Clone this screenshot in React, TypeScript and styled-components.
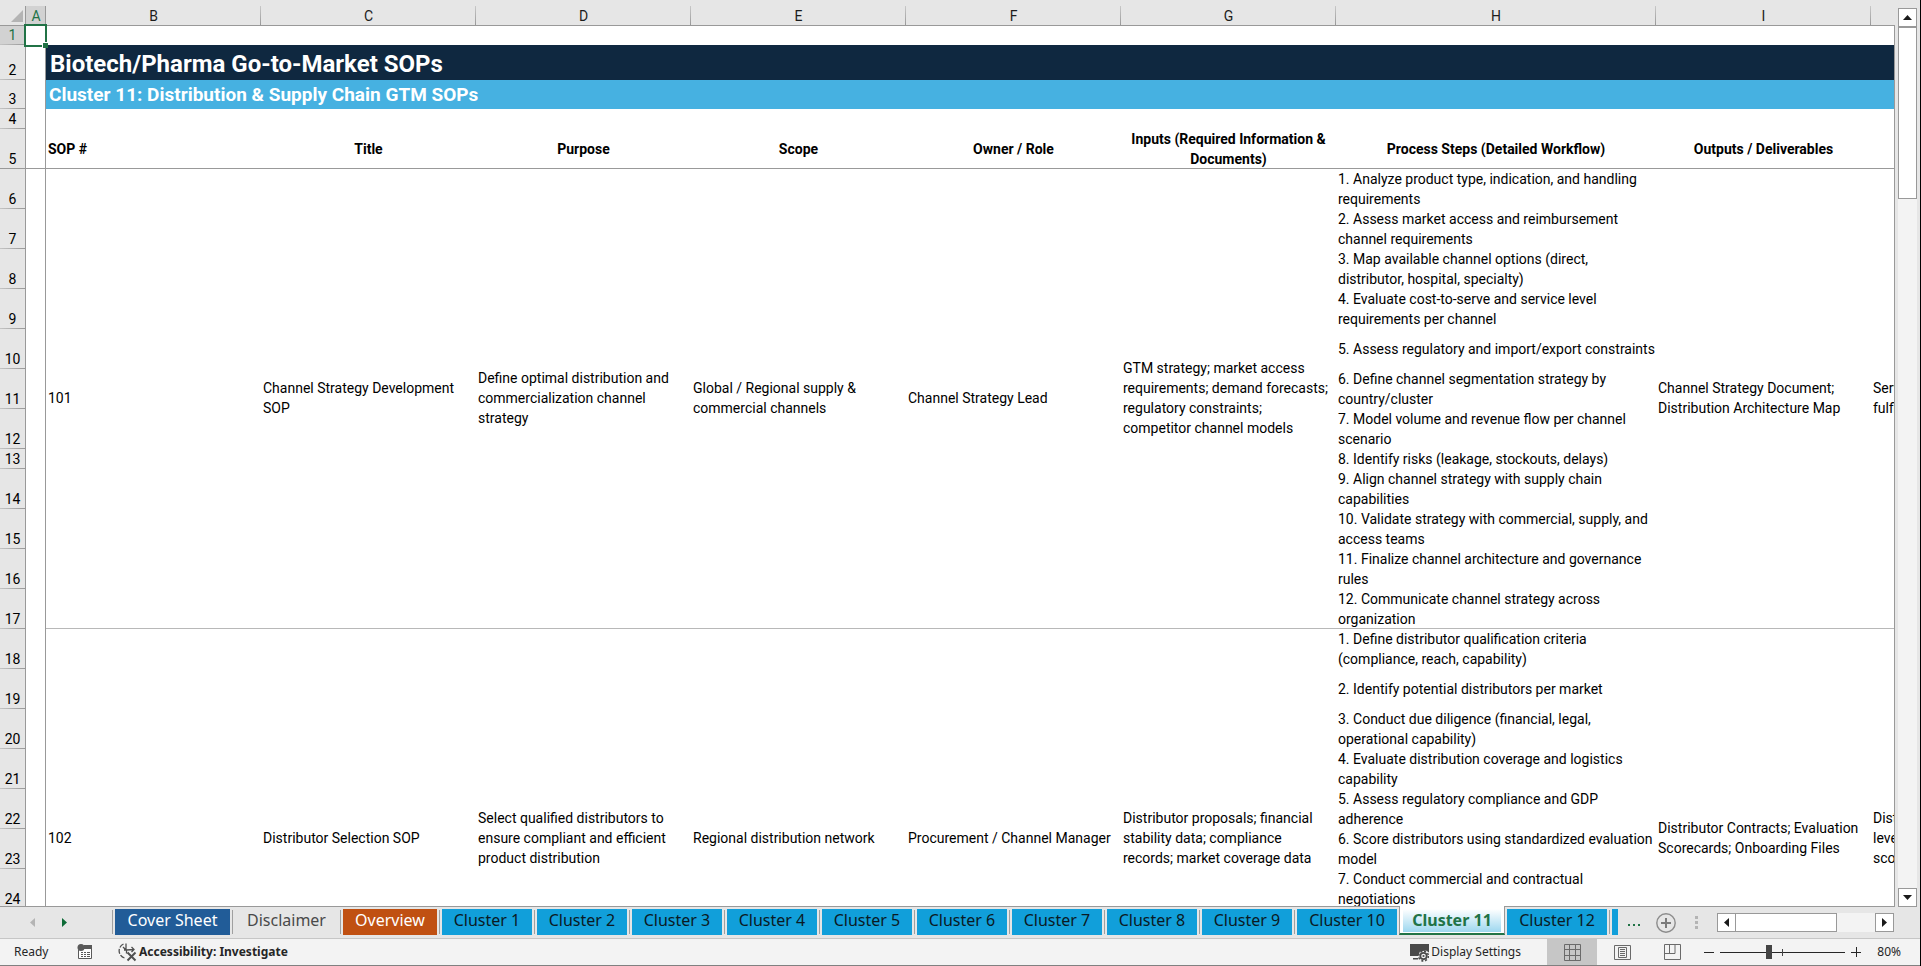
import React from "react";
import styled, { createGlobalStyle, css } from "styled-components";

const SHEET_FONT = 'Roboto, "Liberation Sans", sans-serif';
const UI_FONT = '"Noto Sans", "Open Sans", sans-serif';
const LINE = "#999999";
const GREEN = "#217346";

const GlobalStyle = createGlobalStyle`
  * { box-sizing: border-box; }
  body { margin: 0; background: #e6e6e6; }
  button { margin: 0; padding: 0; border: 0; background: none; font: inherit; color: inherit; }
`;

const Window = styled.div`
  display: flex;
  flex-direction: column;
  height: 100vh;
  overflow: hidden;
  border-right: 1px solid #000;
  background: #e6e6e6;
  color: #000;
  font-family: ${UI_FONT};
`;

const Workspace = styled.main`
  display: flex;
  flex: 1;
  min-height: 0;
`;

const SheetPane = styled.div`
  position: relative;
  flex: 1;
  min-width: 0;
  overflow: hidden;
  border-bottom: 1px solid ${LINE};
  background: linear-gradient(${LINE}, ${LINE}) right bottom / 1px calc(100% - 25px) no-repeat;
`;

const GridClip = styled.div`
  height: 100%;
  margin-right: 1px;
  overflow: hidden;
`;

const Grid = styled.table`
  width: 2086px;
  table-layout: fixed;
  border-collapse: separate;
  border-spacing: 0;
  font-family: ${SHEET_FONT};
  font-size: 14px;
  line-height: 20px;
`;

const Col = styled.col<{ $w: number }>`
  width: ${(p) => p.$w}px;
`;

const Row = styled.tr<{ $h: number }>`
  height: ${(p) => p.$h}px;
`;

const Corner = styled.td`
  padding: 0 3px 3px 0;
  border-bottom: 1px solid ${LINE};
  background: linear-gradient(${LINE}, ${LINE}) right bottom / 1px 19px no-repeat #e6e6e6;
  vertical-align: bottom;
  text-align: right;
  svg { display: block; margin-left: auto; }
`;

const ColumnHead = styled.th<{ $selected?: boolean }>`
  padding: 7px 0 0;
  border-bottom: 1px solid ${LINE};
  background: linear-gradient(#c8c8c8, ${LINE}) right bottom / 1px 19px no-repeat #e6e6e6;
  color: #1c1c1c;
  font-weight: 400;
  line-height: 18px;
  ${(p) =>
    p.$selected &&
    css`
      background:
        linear-gradient(${LINE}, ${LINE}) right bottom / 1px 19px no-repeat,
        linear-gradient(#d2d2d2, #d2d2d2) bottom / 100% 19px no-repeat #e6e6e6;
      color: ${GREEN};
    `}
`;

const RowHead = styled.th<{ $selected?: boolean; $strong?: boolean }>`
  padding: 0 0 1px;
  border-right: 1px solid ${LINE};
  background: linear-gradient(90deg, ${(p) => (p.$strong ? LINE : "#c4c4c4")}, ${LINE}) bottom / 100% 1px no-repeat
    ${(p) => (p.$selected ? "#d2d2d2" : "#e6e6e6")};
  color: ${(p) => (p.$selected ? GREEN : "#000")};
  font-weight: 400;
  line-height: 18px;
  vertical-align: bottom;
`;

/* Cell rules are painted as backgrounds so they never add to the row height. */
const rule = (color: string) => css`
  background: linear-gradient(${color}, ${color}) bottom / 100% 1px no-repeat #fff;
`;

const MarginCell = styled.td<{ $frozen?: boolean }>`
  padding: 0;
  border-right: 1px solid ${LINE};
  background: #fff;
  ${(p) => p.$frozen && rule(LINE)}
`;

const Cell = styled.td`
  padding: 0 2px;
  background: #fff;
  vertical-align: middle;
`;

const RecordCell = styled(Cell)`
  padding-bottom: 2px;
  white-space: pre-line;
  ${rule("#b8b8b8")}
`;

const ClippedCell = styled(RecordCell)`
  white-space: pre;
`;

const StepCell = styled(Cell)<{ $last?: boolean }>`
  padding-right: 0;
  white-space: pre;
  ${(p) => p.$last && rule("#b8b8b8")}
`;

const FieldHead = styled.th<{ $start?: boolean }>`
  padding: 0 2px;
  font-weight: 700;
  text-align: ${(p) => (p.$start ? "left" : "center")};
  vertical-align: middle;
  ${rule(LINE)}
`;

const TitleCell = styled.td`
  padding: 3px 4px 0;
  background: #0f2840;
  color: #fff;
  font-size: 24px;
  font-weight: 700;
  line-height: 30px;
`;

const SubtitleCell = styled.td`
  padding: 0 3px;
  background: #46b1e1;
  color: #fff;
  font-size: 19px;
  font-weight: 700;
  line-height: 28px;
`;

const ActiveCell = styled.div`
  position: absolute;
  left: 24px;
  top: 24px;
  width: 23px;
  height: 23px;
  border: 2px solid ${GREEN};
  &::after {
    content: "";
    position: absolute;
    right: -3px;
    bottom: -3px;
    width: 5px;
    height: 5px;
    background: ${GREEN};
    box-shadow: -1px -1px 0 #fff;
  }
`;

const VerticalScroll = styled.div`
  display: flex;
  flex-direction: column;
  width: 19px;
  margin: 8px 3px 0;
  background: #f3f3f3;
`;

const ArrowButton = styled.button`
  display: flex;
  flex: none;
  align-items: center;
  justify-content: center;
  width: 19px;
  height: 19px;
  border: 1px solid ${LINE};
  background: #fff;
`;

const VerticalTrack = styled.div`
  flex: 1;
`;

const VerticalThumb = styled.div`
  height: 20%;
  border: 1px solid ${LINE};
  background: #fff;
`;

const TabBar = styled.div`
  display: flex;
  flex: none;
  height: 32px;
  border-bottom: 1px solid #c6c6c6;
`;

const TabNav = styled.div`
  display: flex;
  flex: none;
  align-items: center;
  gap: 27px;
  width: 112px;
  padding-left: 30px;
  svg { display: block; }
`;

const TabStrip = styled.nav`
  display: flex;
  flex: 1;
  min-width: 0;
  overflow-x: clip;
  overflow-y: visible;
`;

const TabSlot = styled.div<{ $active?: boolean }>`
  display: flex;
  flex: none;
  align-items: flex-start;
  padding: 2px 2px 0 3px;
  background: linear-gradient(#a0a0a0, #a0a0a0) left 3px / 1px 24px no-repeat;
  ${(p) =>
    p.$active &&
    css`
      z-index: 1;
      height: 29px;
      margin-top: -1px;
      margin-right: -1px;
      padding: 3px 3px 0;
      border: solid ${LINE};
      border-width: 0 1px;
      border-bottom: 2px solid ${GREEN};
      background: #fff;
    `}
`;

const Tab = styled.button<{ $w: number; $bg: string; $fg: string; $active?: boolean }>`
  width: ${(p) => p.$w}px;
  height: 26px;
  padding-bottom: 4px;
  background: ${(p) => p.$bg};
  color: ${(p) => p.$fg};
  font-size: 16px;
  line-height: 22px;
  white-space: nowrap;
  ${(p) =>
    p.$active &&
    css`
      height: 23px;
      padding: 0 0 1px;
      font-weight: 700;
    `}
`;

const TabTools = styled.div`
  display: flex;
  flex: none;
  align-items: center;
  width: 302px;
  padding: 0 26px 0 9px;
  svg { display: block; }
`;

const MoreTabs = styled.button`
  width: 14px;
  height: 8px;
`;

const AddSheet = styled.button`
  margin-left: 15px;
`;

const Grip = styled.div`
  display: flex;
  flex-direction: column;
  gap: 2px;
  margin: 0 auto;
  i { width: 3px; height: 3px; background: #b4b4b4; }
`;

const HorizontalScroll = styled.div`
  display: flex;
  width: 177px;
  background: #f3f3f3;
`;

const HorizontalTrack = styled.div`
  flex: 1;
`;

const HorizontalThumb = styled.div`
  width: 73%;
  height: 19px;
  border: 1px solid ${LINE};
  border-left: 0;
  background: #fff;
`;

const StatusBar = styled.footer`
  display: flex;
  flex: none;
  align-items: center;
  height: 27px;
  padding: 0 19px 0 14px;
  border-bottom: 1px solid #808080;
  background: #f3f3f3;
  color: #262626;
  font-size: 12px;
  line-height: 16px;
  svg { display: block; }
`;

const StatusText = styled.span`
  width: 63px;
`;

const StatusButton = styled.button<{ $bold?: boolean }>`
  display: flex;
  align-items: center;
  gap: 2px;
  margin-left: ${(p) => (p.$bold ? 24 : 0)}px;
  font-weight: ${(p) => (p.$bold ? 700 : 400)};
`;

const StatusRight = styled.div`
  display: flex;
  align-items: center;
  align-self: stretch;
  margin-left: auto;
`;

const ViewButtons = styled.div`
  display: flex;
  align-self: stretch;
  margin-left: 26px;
`;

const ViewButton = styled.button<{ $on?: boolean }>`
  display: flex;
  align-items: center;
  justify-content: center;
  width: 50px;
  background: ${(p) => (p.$on ? "#c6c6c6" : "transparent")};
`;

const ZoomControl = styled.div`
  display: flex;
  align-items: center;
  gap: 6px;
  margin-left: 7px;
`;

const ZoomSlider = styled.input`
  width: 125px;
  height: 16px;
  margin: 0;
  appearance: none;
  background:
    linear-gradient(#444, #444) 62px center / 1px 7px no-repeat,
    linear-gradient(#262626, #262626) center / 100% 1px no-repeat;
  &::-webkit-slider-thumb {
    appearance: none;
    width: 6px;
    height: 14px;
    background: #444;
  }
`;

const ZoomLevel = styled.output`
  width: 34px;
  text-align: right;
`;

const Arrow = ({ dir, color = "#1a1a1a" }: { dir: "up" | "down" | "left" | "right"; color?: string }) => {
  const shapes = {
    up: ["0 0 9 5", "M0 5 4.500 0 9 5z"],
    down: ["0 0 9 5", "M0 0 4.500 5 9 0z"],
    left: ["0 0 5 9", "M5 0 0 4.500 5 9z"],
    right: ["0 0 5 9", "M0 0 5 4.500 0 9z"],
  };
  const [box, d] = shapes[dir];
  const [, , w, h] = box.split(" ");
  return (
    <svg width={w} height={h} viewBox={box} aria-hidden="true">
      <path d={d} fill={color} />
    </svg>
  );
};

const MacroIcon = () => (
  <svg width="16" height="16" viewBox="0 0 16 16" aria-hidden="true">
    <path d="M1.500 6v8.500h13V3" fill="#fff" stroke="#5a5a5a" />
    <path d="M7 1h8v4H6z" fill="#5a5a5a" />
    <circle cx="4" cy="3.500" r="3.500" fill="#5a5a5a" />
    <path d="M4 8.500h2m1 0h2m1 0h3M4 10.500h2m1 0h2m1 0h3M4 12.500h2m1 0h2m1 0h3" stroke="#5a5a5a" />
  </svg>
);

const AccessibilityIcon = () => (
  <svg width="20" height="20" viewBox="0 0 20 20" fill="none" stroke="#505050" aria-hidden="true">
    <path d="M6.500 2A7.500 7.500 0 0 0 7.500 16" strokeDasharray="5 1.500" strokeWidth="1.300" />
    <path d="M9 1.500v6.500M6 5l3 3M7 8l2.500 0L17 7.500M14.500 5l2.500 2.500-2.500 2.500M9.500 8v3.500" strokeWidth="1.300" />
    <path d="M10.500 10.500l8 8M18.500 10.500l-8 8" strokeWidth="2" />
  </svg>
);

const DisplayIcon = () => (
  <svg width="19" height="19" viewBox="0 0 19 19" aria-hidden="true">
    <path d="M0 1h19v8.500l-3-2-6 1-2 4.500H0zM3 15h5v1.500H3z" fill="#4a4a4a" />
    <circle cx="13.500" cy="13" r="3.200" fill="#f3f3f3" stroke="#4a4a4a" strokeWidth="1.800" />
    <circle cx="13.500" cy="13" r="4.900" fill="none" stroke="#4a4a4a" strokeWidth="1.600" strokeDasharray="2 1.850" />
    <circle cx="13.500" cy="13" r="1.100" fill="#4a4a4a" />
  </svg>
);

const NormalViewIcon = () => (
  <svg width="17" height="17" viewBox="0 0 17 17" fill="none" stroke="#6a6a6a" aria-hidden="true">
    <path d="M.5.5h16v16H.5zM5.500.5v16M11.500.5v16M.5 5.500h16M.5 11.500h16" />
  </svg>
);

const PageLayoutIcon = () => (
  <svg width="17" height="17" viewBox="0 0 17 17" fill="none" stroke="#6a6a6a" aria-hidden="true">
    <path d="M.5 1.500h16v14H.5zM4.500 3.500h8v10h-8zM6 5.500h5M6 7.500h5M6 9.500h5M6 11.500h5" />
  </svg>
);

const PageBreakIcon = () => (
  <svg width="17" height="17" viewBox="0 0 17 17" fill="none" stroke="#6a6a6a" aria-hidden="true">
    <path d="M.5.5h16v15H.5zM.5 9.500h10.500v-9M5.500.5v9" />
  </svg>
);

const COLUMNS: [string, number][] = [
  ["A", 20],
  ["B", 215],
  ["C", 215],
  ["D", 215],
  ["E", 215],
  ["F", 215],
  ["G", 215],
  ["H", 320],
  ["I", 215],
  ["J", 215],
];

const FIELDS = [
  "SOP #",
  "Title",
  "Purpose",
  "Scope",
  "Owner / Role",
  "Inputs (Required Information & Documents)",
  "Process Steps (Detailed Workflow)",
  "Outputs / Deliverables",
  "",
];

interface Sop {
  id: string;
  firstRow: number;
  heights: number[];
  before: string[];
  steps: string[];
  outputs: string;
  kpis: string;
}

const SOPS: Sop[] = [
  {
    id: "101",
    firstRow: 6,
    heights: [40, 40, 40, 40, 40, 40, 40, 20, 40, 40, 40, 40],
    before: [
      "Channel Strategy Development SOP",
      "Define optimal distribution and commercialization channel strategy",
      "Global / Regional supply & commercial channels",
      "Channel Strategy Lead",
      "GTM strategy; market access requirements; demand forecasts; regulatory constraints;\ncompetitor channel models",
    ],
    steps: [
      "1. Analyze product type, indication, and handling\nrequirements",
      "2. Assess market access and reimbursement\nchannel requirements",
      "3. Map available channel options (direct,\ndistributor, hospital, specialty)",
      "4. Evaluate cost-to-serve and service level\nrequirements per channel",
      "5. Assess regulatory and import/export constraints",
      "6. Define channel segmentation strategy by\ncountry/cluster",
      "7. Model volume and revenue flow per channel\nscenario",
      "8. Identify risks (leakage, stockouts, delays)",
      "9. Align channel strategy with supply chain\ncapabilities",
      "10. Validate strategy with commercial, supply, and\naccess teams",
      "11. Finalize channel architecture and governance\nrules",
      "12. Communicate channel strategy across\norganization",
    ],
    outputs: "Channel Strategy Document; Distribution Architecture Map",
    kpis: "Service level;\nfulfillment rate",
  },
  {
    id: "102",
    firstRow: 18,
    heights: [40, 40, 40, 40, 40, 40, 40, 40, 40, 40, 20],
    before: [
      "Distributor Selection SOP",
      "Select qualified distributors to ensure compliant and efficient product distribution",
      "Regional distribution network",
      "Procurement / Channel Manager",
      "Distributor proposals; financial stability data; compliance records; market coverage data",
    ],
    steps: [
      "1. Define distributor qualification criteria\n(compliance, reach, capability)",
      "2. Identify potential distributors per market",
      "3. Conduct due diligence (financial, legal,\noperational capability)",
      "4. Evaluate distribution coverage and logistics\ncapability",
      "5. Assess regulatory compliance and GDP\nadherence",
      "6. Score distributors using standardized evaluation\nmodel",
      "7. Conduct commercial and contractual\nnegotiations",
    ],
    outputs: "Distributor Contracts; Evaluation Scorecards; Onboarding Files",
    kpis: "Distributor service\nlevels; compliance\nscores",
  },
];

interface TabInfo {
  label: string;
  w: number;
  bg: string;
  fg: string;
  active?: boolean;
}

const BLUE = "#119fda";
const clusterTab = (n: number): TabInfo => ({
  label: `Cluster ${n}`,
  w: n < 10 ? 90 : 100,
  bg: BLUE,
  fg: "#0b1a24",
});

const TABS: TabInfo[] = [
  { label: "Cover Sheet", w: 115, bg: "#215c98", fg: "#fff" },
  { label: "Disclaimer", w: 103, bg: "transparent", fg: "#4a4a4a" },
  { label: "Overview", w: 94, bg: "#c05012", fg: "#fff" },
  ...[1, 2, 3, 4, 5, 6, 7, 8, 9, 10].map(clusterTab),
  { label: "Cluster 11", w: 98, bg: "linear-gradient(#fff, #9dd7ef)", fg: GREEN, active: true },
  clusterTab(12),
  clusterTab(13),
];

const DATA_COLUMNS = COLUMNS.length - 1;

export default function App() {
  return (
    <Window>
      <GlobalStyle />
      <Workspace>
        <SheetPane>
          <GridClip>
            <Grid>
              <colgroup>
                <Col $w={26} />
                {COLUMNS.map(([name, w]) => (
                  <Col key={name} $w={w} />
                ))}
              </colgroup>
              <thead>
                <Row $h={26}>
                  <Corner>
                    <svg width="12" height="12" viewBox="0 0 12 12" aria-hidden="true">
                      <path d="M12 0v12H0z" fill="#b4b4b4" />
                    </svg>
                  </Corner>
                  {COLUMNS.map(([name], i) => (
                    <ColumnHead key={name} scope="col" $selected={i === 0}>
                      {name}
                    </ColumnHead>
                  ))}
                </Row>
              </thead>
              <tbody>
                <Row $h={19}>
                  <RowHead scope="row" $selected>1</RowHead>
                  <MarginCell />
                  <Cell colSpan={DATA_COLUMNS} />
                </Row>
                <Row $h={35}>
                  <RowHead scope="row">2</RowHead>
                  <MarginCell />
                  <TitleCell colSpan={DATA_COLUMNS}>Biotech/Pharma Go-to-Market SOPs</TitleCell>
                </Row>
                <Row $h={29}>
                  <RowHead scope="row">3</RowHead>
                  <MarginCell />
                  <SubtitleCell colSpan={DATA_COLUMNS}>Cluster 11: Distribution &amp; Supply Chain GTM SOPs</SubtitleCell>
                </Row>
                <Row $h={20}>
                  <RowHead scope="row">4</RowHead>
                  <MarginCell />
                  <Cell colSpan={DATA_COLUMNS} />
                </Row>
                <Row $h={40}>
                  <RowHead scope="row" $strong>5</RowHead>
                  <MarginCell $frozen />
                  {FIELDS.map((name, i) => (
                    <FieldHead key={i} scope="col" $start={i === 0}>
                      {name}
                    </FieldHead>
                  ))}
                </Row>
                {SOPS.map((sop) =>
                  sop.heights.map((h, i) => {
                    const span = sop.heights.length;
                    return (
                      <Row key={`${sop.id}-${i}`} $h={h}>
                        <RowHead scope="row">{sop.firstRow + i}</RowHead>
                        <MarginCell />
                        {i === 0 && <RecordCell rowSpan={span}>{sop.id}</RecordCell>}
                        {i === 0 &&
                          sop.before.map((text) => (
                            <RecordCell key={text} rowSpan={span}>
                              {text}
                            </RecordCell>
                          ))}
                        <StepCell $last={i === span - 1}>{sop.steps[i]}</StepCell>
                        {i === 0 && <RecordCell rowSpan={span}>{sop.outputs}</RecordCell>}
                        {i === 0 && <ClippedCell rowSpan={span}>{sop.kpis}</ClippedCell>}
                      </Row>
                    );
                  })
                )}
              </tbody>
            </Grid>
          </GridClip>
          <ActiveCell />
        </SheetPane>
        <VerticalScroll>
          <ArrowButton aria-label="Scroll up"><Arrow dir="up" /></ArrowButton>
          <VerticalTrack><VerticalThumb /></VerticalTrack>
          <ArrowButton aria-label="Scroll down"><Arrow dir="down" /></ArrowButton>
        </VerticalScroll>
      </Workspace>

      <TabBar>
        <TabNav>
          <button aria-label="Previous sheets"><Arrow dir="left" color="#b4b4b4" /></button>
          <button aria-label="Next sheets"><Arrow dir="right" color="#0e6b37" /></button>
        </TabNav>
        <TabStrip aria-label="Sheets">
          {TABS.map((t) => (
            <TabSlot key={t.label} $active={t.active}>
              <Tab $w={t.w} $bg={t.bg} $fg={t.fg} $active={t.active}>
                {t.label}
              </Tab>
            </TabSlot>
          ))}
        </TabStrip>
        <TabTools>
          <MoreTabs aria-label="More sheets">
            <svg width="14" height="8" viewBox="0 0 14 8" fill="#217346" aria-hidden="true">
              <path d="M1 5h2v2H1zM6 5h2v2H6zM11 5h2v2h-2z" />
            </svg>
          </MoreTabs>
          <AddSheet aria-label="New sheet">
            <svg width="20" height="20" viewBox="0 0 20 20" fill="none" stroke="#8c8c8c" aria-hidden="true">
              <circle cx="10" cy="10" r="9.200" strokeWidth="1.400" />
              <path d="M10 5v10M5 10h10" strokeWidth="2" stroke="#7a7a7a" />
            </svg>
          </AddSheet>
          <Grip><i /><i /><i /></Grip>
          <HorizontalScroll>
            <ArrowButton aria-label="Scroll left"><Arrow dir="left" /></ArrowButton>
            <HorizontalTrack><HorizontalThumb /></HorizontalTrack>
            <ArrowButton aria-label="Scroll right"><Arrow dir="right" /></ArrowButton>
          </HorizontalScroll>
        </TabTools>
      </TabBar>

      <StatusBar>
        <StatusText>Ready</StatusText>
        <button aria-label="Record macro"><MacroIcon /></button>
        <StatusButton $bold>
          <AccessibilityIcon />
          Accessibility: Investigate
        </StatusButton>
        <StatusRight>
          <StatusButton>
            <DisplayIcon />
            Display Settings
          </StatusButton>
          <ViewButtons>
            <ViewButton $on aria-label="Normal view"><NormalViewIcon /></ViewButton>
            <ViewButton aria-label="Page layout view"><PageLayoutIcon /></ViewButton>
            <ViewButton aria-label="Page break preview"><PageBreakIcon /></ViewButton>
          </ViewButtons>
          <ZoomControl>
            <button aria-label="Zoom out">
              <svg width="10" height="10" viewBox="0 0 10 10" stroke="#262626" aria-hidden="true">
                <path d="M0 5.500h10" />
              </svg>
            </button>
            <ZoomSlider type="range" min={0} max={100} defaultValue={39} aria-label="Zoom" />
            <button aria-label="Zoom in">
              <svg width="10" height="10" viewBox="0 0 10 10" stroke="#262626" aria-hidden="true">
                <path d="M0 5.500h10M5.500 0v10" />
              </svg>
            </button>
            <ZoomLevel>80%</ZoomLevel>
          </ZoomControl>
        </StatusRight>
      </StatusBar>
    </Window>
  );
}
